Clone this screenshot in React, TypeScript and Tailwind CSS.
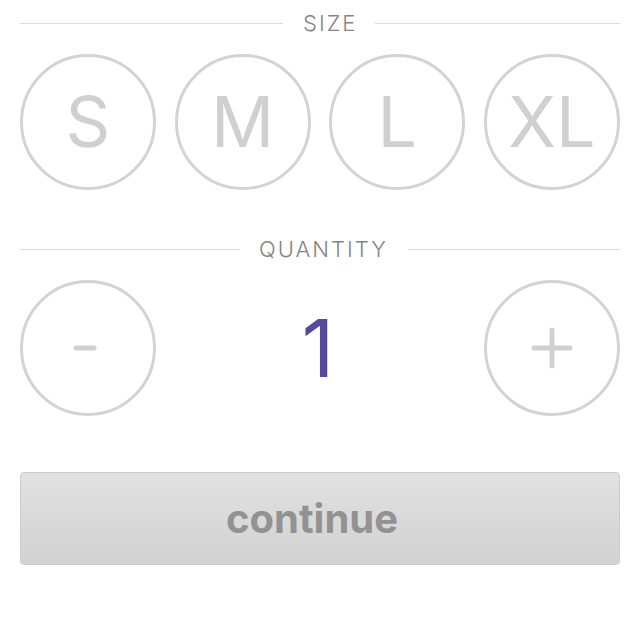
import React from "react";

function Circle({ children }: { children: React.ReactNode }) {
  return (
    <div className="flex h-[136px] w-[136px] items-center justify-center rounded-full border-[3px] border-[#d3d3d3] text-[70px] font-normal leading-none text-[#d0d0d0]">
      {children}
    </div>
  );
}

export default function App() {
  return (
    <div className="h-[621px] w-[640px] bg-white px-[20px]" style={{ fontFamily: "Inter, 'Open Sans', sans-serif" }}>
      <div className="flex h-[46px] items-center">
        <div className="h-px w-[263px] bg-[#dcdcdc]" />
        <div className="pl-[20px] pr-[18px] text-[22px] font-light leading-none tracking-[2px] text-[#858585]">SIZE</div>
        <div className="h-px flex-1 bg-[#dcdcdc]" />
      </div>
      <div className="mt-[8px] flex justify-between">
        <Circle>S</Circle>
        <Circle>M</Circle>
        <Circle>L</Circle>
        <Circle>XL</Circle>
      </div>
      <div className="mt-[36px] flex h-[46px] items-center">
        <div className="h-px w-[220px] bg-[#dcdcdc]" />
        <div className="pl-[19px] pr-[20px] text-[22px] font-light leading-none tracking-[2px] text-[#858585]">QUANTITY</div>
        <div className="h-px flex-1 bg-[#dcdcdc]" />
      </div>
      <div className="mt-[8px] flex items-center justify-between">
        <Circle>
          <svg className="mr-[6px]" width="24" height="6" viewBox="0 0 24 6">
            <line x1="3" y1="3" x2="21" y2="3" stroke="#d0d0d0" strokeWidth="5" strokeLinecap="round" />
          </svg>
        </Circle>
        <div className="pr-[4px] text-[80px] font-normal leading-none text-[#554a9f]">1</div>
        <Circle>
          <svg width="42" height="42" viewBox="0 0 42 42">
            <line x1="3" y1="21" x2="39" y2="21" stroke="#d0d0d0" strokeWidth="5" strokeLinecap="round" />
            <line x1="21" y1="3" x2="21" y2="39" stroke="#d0d0d0" strokeWidth="5" strokeLinecap="round" />
          </svg>
        </Circle>
      </div>
      <button className="mt-[56px] flex h-[93px] w-full items-center justify-center rounded-[4px] border border-[#cbcbcb] bg-gradient-to-b from-[#e1e1e1] to-[#d2d2d2] pr-[16px] text-[40px] font-bold text-[#929292]">
        continue
      </button>
    </div>
  );
}
